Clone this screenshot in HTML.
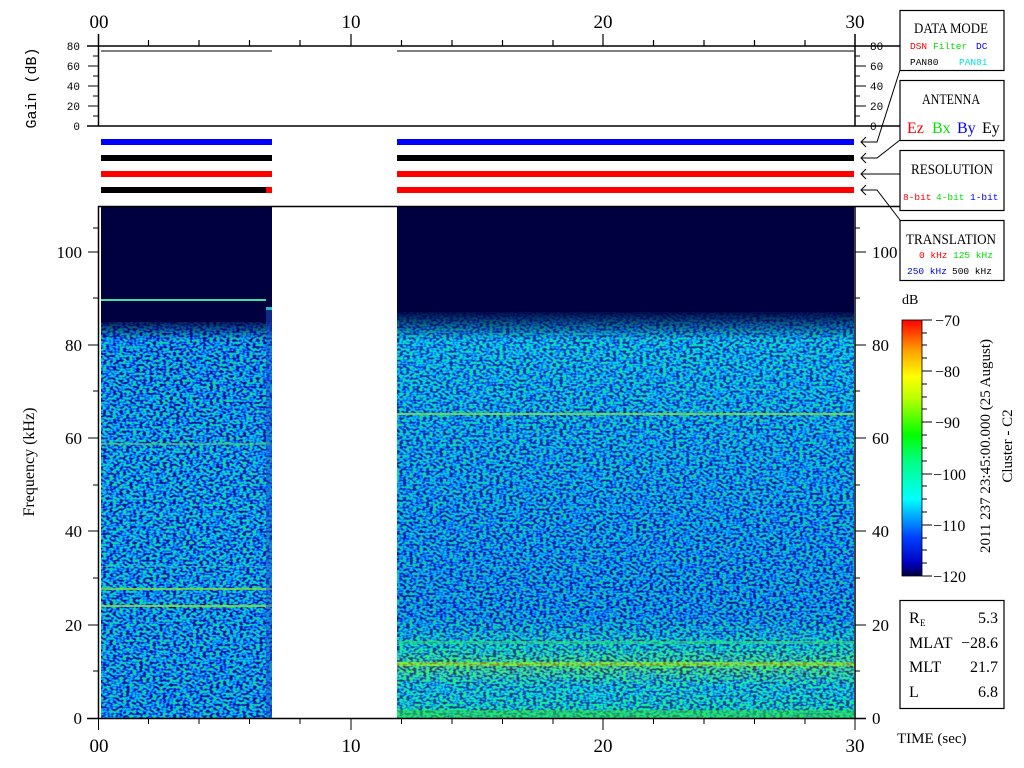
<!DOCTYPE html>
<html><head><meta charset="utf-8"><style>
html,body{margin:0;padding:0;background:#fff;}
svg{display:block;}
text{font-family:"Liberation Mono",monospace;}
.s{font-family:"Liberation Serif",serif;}
</style></head><body>
<svg width="1024" height="768" viewBox="0 0 1024 768" xmlns="http://www.w3.org/2000/svg">
<defs>
<filter id="nz" x="0" y="0" width="100%" height="100%" color-interpolation-filters="sRGB">
<feTurbulence type="fractalNoise" baseFrequency="0.3 0.45" numOctaves="1" seed="3" result="t"/>
<feComponentTransfer><feFuncR type="linear" slope="2.4" intercept="-0.65"/></feComponentTransfer>
<feColorMatrix type="matrix" values="1 0 0 0 0  1 0 0 0 0  1 0 0 0 0  0 0 0 0 1"/>
<feComponentTransfer>
<feFuncR type="discrete" tableValues="0 0 0 0 0 0 0 0.1"/>
<feFuncG type="discrete" tableValues="0 0 0.1 0.35 0.6 0.85 0.95 1"/>
<feFuncB type="discrete" tableValues="0.3 0.45 0.85 1 1 0.95 0.7 0.4"/>
<feFuncA type="discrete" tableValues="1"/>
</feComponentTransfer>
</filter>
<linearGradient id="gl" x1="0" y1="0" x2="0" y2="1">
<stop offset="0" stop-color="#1030c0"/>
<stop offset="0.5" stop-color="#1070e0"/>
<stop offset="1" stop-color="#1060d8"/>
</linearGradient>
<linearGradient id="gr" x1="0" y1="0" x2="0" y2="1">
<stop offset="0" stop-color="#1050d8"/>
<stop offset="0.25" stop-color="#10b0e0"/>
<stop offset="0.6" stop-color="#1070e0"/>
<stop offset="0.8" stop-color="#1060d8"/>
<stop offset="0.86" stop-color="#20d0a0"/>
<stop offset="0.9" stop-color="#a0f000"/>
<stop offset="0.94" stop-color="#20c8c0"/>
<stop offset="1" stop-color="#30e070"/>
</linearGradient>
<linearGradient id="cb" x1="0" y1="1" x2="0" y2="0">
<stop offset="0" stop-color="#000040"/>
<stop offset="0.05" stop-color="#0000c0"/>
<stop offset="0.15" stop-color="#0040ff"/>
<stop offset="0.3" stop-color="#00ffff"/>
<stop offset="0.45" stop-color="#00ff80"/>
<stop offset="0.55" stop-color="#00ff00"/>
<stop offset="0.7" stop-color="#c0ff00"/>
<stop offset="0.78" stop-color="#ffff00"/>
<stop offset="0.88" stop-color="#ffa000"/>
<stop offset="1" stop-color="#ff0000"/>
</linearGradient>
<linearGradient id="fade" x1="0" y1="0" x2="0" y2="1">
<stop offset="0" stop-color="#000040" stop-opacity="1"/>
<stop offset="1" stop-color="#000040" stop-opacity="0"/>
</linearGradient>
</defs>

<rect x="101" y="207" width="171" height="511" fill="url(#gl)"/>
<rect x="101" y="315" width="171" height="403" filter="url(#nz)" opacity="0.75"/>
<rect x="101" y="207" width="171" height="115" fill="#000040"/>
<rect x="101" y="318" width="171" height="22" fill="url(#fade)"/>
<rect x="101" y="299" width="165" height="2" fill="#40e0a0"/>
<rect x="266" y="307" width="6" height="3" fill="#20c0c0"/>
<rect x="101" y="443" width="171" height="2" fill="#60d060" opacity="0.6"/>
<rect x="101" y="588" width="171" height="2" fill="#80e040" opacity="0.8"/>
<rect x="101" y="605" width="171" height="2" fill="#a0e020" opacity="0.8"/>
<rect x="101" y="566" width="171" height="1" fill="#40d0c0" opacity="0.5"/>
<rect x="266" y="310" width="6" height="408" fill="#2050d0" opacity="0.5"/>

<rect x="397" y="207" width="457" height="511" fill="url(#gr)"/>
<rect x="397" y="300" width="457" height="418" filter="url(#nz)" opacity="0.65"/>
<rect x="397" y="207" width="457" height="105" fill="#000040"/>
<rect x="397" y="310" width="457" height="30" fill="url(#fade)"/>
<rect x="397" y="413" width="457" height="2" fill="#90e030" opacity="0.8"/>
<rect x="397" y="641" width="457" height="3" fill="#30e080" opacity="0.6"/>
<rect x="397" y="662" width="457" height="4" fill="#c0f000" opacity="0.45"/>
<rect x="397" y="710" width="457" height="8" fill="#30e040" opacity="0.5"/>

<g stroke="#000" stroke-width="1.5" fill="none">
<line x1="87" y1="46" x2="900" y2="46"/>
<line x1="87" y1="126" x2="900" y2="126"/>
<line x1="98.5" y1="34" x2="98.5" y2="126"/>
<line x1="855" y1="34" x2="855" y2="126"/>
</g>
<g stroke="#000" stroke-width="1">
<line x1="101" y1="51" x2="272" y2="51"/>
<line x1="397" y1="51" x2="854" y2="51"/>
<line x1="88" y1="66" x2="98" y2="66"/><line x1="88" y1="86" x2="98" y2="86"/><line x1="88" y1="106" x2="98" y2="106"/>
<line x1="93" y1="56" x2="98" y2="56"/><line x1="93" y1="76" x2="98" y2="76"/><line x1="93" y1="96" x2="98" y2="96"/><line x1="93" y1="116" x2="98" y2="116"/>
<line x1="855" y1="66" x2="866" y2="66"/><line x1="855" y1="86" x2="866" y2="86"/><line x1="855" y1="106" x2="866" y2="106"/><line x1="855" y1="46" x2="866" y2="46"/><line x1="855" y1="126" x2="866" y2="126"/>
<line x1="855" y1="56" x2="860" y2="56"/><line x1="855" y1="76" x2="860" y2="76"/><line x1="855" y1="96" x2="860" y2="96"/><line x1="855" y1="116" x2="860" y2="116"/>
</g>
<g stroke="#000" stroke-width="1.2">
<line x1="148.5" y1="40" x2="148.5" y2="46"/><line x1="199" y1="40" x2="199" y2="46"/><line x1="249.5" y1="40" x2="249.5" y2="46"/><line x1="300" y1="40" x2="300" y2="46"/>
<line x1="351" y1="34" x2="351" y2="46"/>
<line x1="401.5" y1="40" x2="401.5" y2="46"/><line x1="452" y1="40" x2="452" y2="46"/><line x1="502.5" y1="40" x2="502.5" y2="46"/><line x1="553" y1="40" x2="553" y2="46"/>
<line x1="603" y1="34" x2="603" y2="46"/>
<line x1="653.5" y1="40" x2="653.5" y2="46"/><line x1="704" y1="40" x2="704" y2="46"/><line x1="754.5" y1="40" x2="754.5" y2="46"/><line x1="805" y1="40" x2="805" y2="46"/>
</g>
<g font-size="11" fill="#000">
<text x="80" y="50" text-anchor="end">80</text><text x="80" y="70" text-anchor="end">60</text><text x="80" y="90" text-anchor="end">40</text><text x="80" y="110" text-anchor="end">20</text><text x="80" y="130" text-anchor="end">0</text>
<text x="870" y="50">80</text><text x="870" y="70">60</text><text x="870" y="90">40</text><text x="870" y="110">20</text><text x="870" y="130">0</text>
</g>
<g font-size="19" fill="#000" text-anchor="middle">
<text class="s" x="99" y="28">00</text><text class="s" x="351" y="28">10</text><text class="s" x="603" y="28">20</text><text class="s" x="855" y="28">30</text>
<text class="s" x="99" y="752">00</text><text class="s" x="351" y="752">10</text><text class="s" x="603" y="752">20</text><text class="s" x="855" y="752">30</text>
</g>
<text x="36" y="88" font-size="15" text-anchor="middle" transform="rotate(-90 36 88)">Gain (dB)</text>

<rect x="101" y="139" width="171" height="6" fill="#0000ff"/><rect x="397" y="139" width="457" height="6" fill="#0000ff"/>
<rect x="101" y="155" width="171" height="6" fill="#000"/><rect x="397" y="155" width="457" height="6" fill="#000"/>
<rect x="101" y="171" width="171" height="6" fill="#ff0000"/><rect x="397" y="171" width="457" height="6" fill="#ff0000"/>
<rect x="101" y="187" width="165" height="6" fill="#000"/><rect x="266" y="187" width="6" height="6" fill="#ff0000"/><rect x="397" y="187" width="457" height="6" fill="#ff0000"/>

<g stroke="#000" stroke-width="1.5" fill="none">
<line x1="98.5" y1="206" x2="98.5" y2="718"/>
<line x1="855" y1="206" x2="855" y2="718"/>
<line x1="98" y1="206.5" x2="900" y2="206.5"/>
<line x1="87" y1="718.5" x2="866" y2="718.5"/>
</g>
<g stroke="#000" stroke-width="1">
<line x1="88" y1="252" x2="98" y2="252"/><line x1="88" y1="345" x2="98" y2="345"/><line x1="88" y1="438" x2="98" y2="438"/><line x1="88" y1="531" x2="98" y2="531"/><line x1="88" y1="625" x2="98" y2="625"/>
<line x1="93" y1="298" x2="98" y2="298"/><line x1="93" y1="391" x2="98" y2="391"/><line x1="93" y1="485" x2="98" y2="485"/><line x1="93" y1="578" x2="98" y2="578"/><line x1="93" y1="671" x2="98" y2="671"/><line x1="93" y1="228" x2="98" y2="228"/>
<line x1="855" y1="252" x2="866" y2="252"/><line x1="855" y1="345" x2="866" y2="345"/><line x1="855" y1="438" x2="866" y2="438"/><line x1="855" y1="531" x2="866" y2="531"/><line x1="855" y1="625" x2="866" y2="625"/>
<line x1="855" y1="298" x2="860" y2="298"/><line x1="855" y1="391" x2="860" y2="391"/><line x1="855" y1="485" x2="860" y2="485"/><line x1="855" y1="578" x2="860" y2="578"/><line x1="855" y1="671" x2="860" y2="671"/><line x1="855" y1="228" x2="860" y2="228"/>
<line x1="148.5" y1="718" x2="148.5" y2="724"/><line x1="199" y1="718" x2="199" y2="724"/><line x1="249.5" y1="718" x2="249.5" y2="724"/><line x1="300" y1="718" x2="300" y2="724"/>
<line x1="351" y1="718" x2="351" y2="730"/>
<line x1="401.5" y1="718" x2="401.5" y2="724"/><line x1="452" y1="718" x2="452" y2="724"/><line x1="502.5" y1="718" x2="502.5" y2="724"/><line x1="553" y1="718" x2="553" y2="724"/>
<line x1="603" y1="718" x2="603" y2="730"/>
<line x1="653.5" y1="718" x2="653.5" y2="724"/><line x1="704" y1="718" x2="704" y2="724"/><line x1="754.5" y1="718" x2="754.5" y2="724"/><line x1="805" y1="718" x2="805" y2="724"/>
<line x1="98.5" y1="718" x2="98.5" y2="730"/><line x1="855" y1="718" x2="855" y2="730"/>
</g>
<g font-size="17" fill="#000">
<text class="s" x="82" y="258" text-anchor="end">100</text><text class="s" x="82" y="351" text-anchor="end">80</text><text class="s" x="82" y="444" text-anchor="end">60</text><text class="s" x="82" y="537" text-anchor="end">40</text><text class="s" x="82" y="631" text-anchor="end">20</text><text class="s" x="82" y="724" text-anchor="end">0</text>
<text class="s" x="872" y="258">100</text><text class="s" x="872" y="351">80</text><text class="s" x="872" y="444">60</text><text class="s" x="872" y="537">40</text><text class="s" x="872" y="631">20</text><text class="s" x="872" y="724">0</text>
</g>
<text class="s" x="34" y="462" font-size="16" text-anchor="middle" transform="rotate(-90 34 462)">Frequency (kHz)</text>

<g stroke="#000" stroke-width="1.2" fill="#fff">
<rect x="900" y="10.5" width="104" height="60"/>
<rect x="900" y="80.5" width="104" height="60"/>
<rect x="900" y="150.5" width="104" height="60"/>
<rect x="900" y="220.5" width="104" height="60"/>
</g>
<g stroke="#000" stroke-width="1" fill="none">
<polyline points="900,70 877,142 862,142"/>
<polyline points="900,140 877,158 862,158"/>
<polyline points="900,174 862,174"/>
<polyline points="900,220 877,190 862,190"/>
<polyline points="866,137 861,142 866,147"/>
<polyline points="866,153 861,158 866,163"/>
<polyline points="866,169 861,174 866,179"/>
<polyline points="866,185 861,190 866,195"/>
</g>
<g font-size="15" fill="#000">
<text class="s" x="914" y="33" textLength="74" lengthAdjust="spacingAndGlyphs">DATA MODE</text>
<text class="s" x="922" y="104" textLength="58" lengthAdjust="spacingAndGlyphs">ANTENNA</text>
<text class="s" x="911" y="174" textLength="82" lengthAdjust="spacingAndGlyphs">RESOLUTION</text>
<text class="s" x="906" y="244" textLength="90" lengthAdjust="spacingAndGlyphs">TRANSLATION</text>
</g>
<g font-size="9.5">
<text x="910" y="49" fill="#ff0000">DSN</text><text x="933" y="49" fill="#00e000">Filter</text><text x="976" y="49" fill="#0000ff">DC</text>
<text x="910" y="65" fill="#000">PAN80</text><text x="959" y="65" fill="#00e0e0">PAN81</text>
<text x="903" y="200" fill="#ff0000">8-bit</text><text x="936" y="200" fill="#00e000">4-bit</text><text x="970" y="200" fill="#0000ff">1-bit</text>
<text x="919" y="258" fill="#ff0000">0 kHz</text><text x="953" y="258" fill="#00e000">125 kHz</text>
<text x="907" y="274" fill="#0000ff">250 kHz</text><text x="952" y="274" fill="#000">500 kHz</text>
</g>
<g font-size="16">
<text class="s" x="907" y="133" fill="#ff0000">Ez</text><text class="s" x="932" y="133" fill="#00e000">Bx</text><text class="s" x="957" y="133" fill="#0000ff">By</text><text class="s" x="982" y="133" fill="#000">Ey</text>
</g>

<text class="s" x="902" y="304" font-size="14">dB</text>
<rect x="902" y="320" width="20" height="256" fill="url(#cb)" stroke="#000" stroke-width="0.8"/>
<g stroke="#000" stroke-width="1">
<line x1="922" y1="320" x2="932" y2="320"/><line x1="922" y1="371" x2="932" y2="371"/><line x1="922" y1="422" x2="932" y2="422"/><line x1="922" y1="474" x2="932" y2="474"/><line x1="922" y1="525" x2="932" y2="525"/><line x1="922" y1="576" x2="932" y2="576"/>
<line x1="922" y1="333" x2="927" y2="333"/><line x1="922" y1="345" x2="927" y2="345"/><line x1="922" y1="358" x2="927" y2="358"/><line x1="922" y1="384" x2="927" y2="384"/><line x1="922" y1="397" x2="927" y2="397"/><line x1="922" y1="409" x2="927" y2="409"/><line x1="922" y1="435" x2="927" y2="435"/><line x1="922" y1="448" x2="927" y2="448"/><line x1="922" y1="461" x2="927" y2="461"/><line x1="922" y1="486" x2="927" y2="486"/><line x1="922" y1="499" x2="927" y2="499"/><line x1="922" y1="512" x2="927" y2="512"/><line x1="922" y1="538" x2="927" y2="538"/><line x1="922" y1="550" x2="927" y2="550"/><line x1="922" y1="563" x2="927" y2="563"/>
</g>
<g font-size="16" fill="#000">
<text class="s" x="935" y="326">−70</text><text class="s" x="935" y="377">−80</text><text class="s" x="935" y="428">−90</text><text class="s" x="933" y="480">−100</text><text class="s" x="933" y="531">−110</text><text class="s" x="933" y="582">−120</text>
</g>
<text class="s" x="990" y="446" font-size="15" text-anchor="middle" transform="rotate(-90 990 446)">2011 237 23:45:00.000 (25 August)</text>
<text class="s" x="1012" y="446" font-size="15" text-anchor="middle" transform="rotate(-90 1012 446)">Cluster - C2</text>

<rect x="900" y="600.5" width="104" height="108" fill="#fff" stroke="#000" stroke-width="1.2"/>
<g font-size="16" fill="#000">
<text class="s" x="909" y="623">R</text><text class="s" x="920" y="626" font-size="9">E</text><text class="s" x="998" y="623" text-anchor="end">5.3</text>
<text class="s" x="909" y="648">MLAT</text><text class="s" x="998" y="648" text-anchor="end">−28.6</text>
<text class="s" x="909" y="672">MLT</text><text class="s" x="998" y="672" text-anchor="end">21.7</text>
<text class="s" x="909" y="697">L</text><text class="s" x="998" y="697" text-anchor="end">6.8</text>
</g>
<text class="s" x="897" y="743" font-size="15">TIME (sec)</text>
</svg>
</body></html>
